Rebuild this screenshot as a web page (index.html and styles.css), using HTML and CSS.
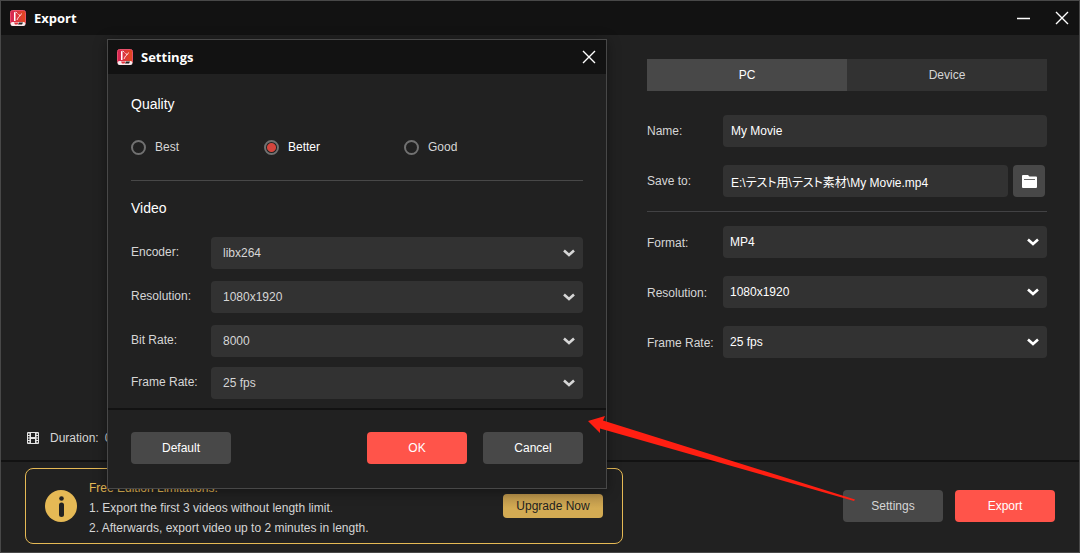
FILE: index.html
```html
<!DOCTYPE html>
<html lang="en">
<head>
<meta charset="utf-8">
<title>Export</title>
<link rel="stylesheet" href="styles.css">
</head>
<body>
<svg class="defs" aria-hidden="true">
  <defs>
    <linearGradient id="logo-fill" x1="0" x2="1" y1="0" y2="0">
      <stop offset="0" stop-color="#d62358"/>
      <stop offset="1" stop-color="#e24a1c"/>
    </linearGradient>
    <symbol id="logo" viewBox="0 0 16 16">
      <rect x="0.5" y="0.5" width="15" height="14" rx="2" fill="url(#logo-fill)" stroke="#e8506a"/>
      <path d="M4 2.500L5.500 1.500V11H4z" fill="#fff"/>
      <path d="M6 2l1.500 1.500M7 10l1.500-3 2-1.500 1-2M8.500 4l1.500 2" stroke="#ffe6e6" stroke-width="0.900" fill="none"/>
      <rect x="0.500" y="12" width="15" height="4" rx="2" fill="#fbe9ec"/>
      <path d="M9 12.500h4l-1 2H8z" fill="#222"/>
      <path d="M4 12.500h4.500l-1 2H5z" fill="#e03038"/>
    </symbol>
    <symbol id="close" viewBox="0 0 14 14">
      <path d="M1 1l12 12M13 1L1 13" stroke="#fff" stroke-width="1.400" fill="none"/>
    </symbol>
    <symbol id="chevron" viewBox="0 0 12 8">
      <path d="M1 1.500l5 4.500 5-4.500" stroke="currentColor" stroke-width="2.600" fill="none"/>
    </symbol>
  </defs>
</svg>

<div class="window">
  <header class="titlebar">
    <svg class="logo"><use href="#logo"/></svg>
    <h1 class="title">Export</h1>
    <button class="window-button" aria-label="Minimize"><svg class="window-icon" viewBox="0 0 14 14"><path d="M0 7.500h13" stroke="#fff" stroke-width="1.500"/></svg></button>
    <button class="window-button" aria-label="Close"><svg class="window-icon"><use href="#close"/></svg></button>
  </header>

  <main class="content">
    <section class="preview">
      <p class="duration">
        <svg class="film" viewBox="0 0 12 12"><rect width="12" height="12" rx="1" fill="#e4e4e4"/><path d="M4 1h4v4H4zM4 7h4v4H4zM1 1.500h1.500V3H1zM1 4h1.500v1.500H1zM1 6.500h1.500V8H1zM1 9h1.500v1.500H1zM9.500 1.500H11V3H9.500zM9.500 4H11v1.500H9.500zM9.500 6.500H11V8H9.500zM9.500 9H11v1.500H9.500z" fill="#222"/></svg>
        <span>Duration:</span><span>00:00:10</span>
      </p>
    </section>

    <form class="output">
      <div class="tabs" role="tablist">
        <button type="button" class="tab tab-active" role="tab" aria-selected="true">PC</button>
        <button type="button" class="tab" role="tab" aria-selected="false">Device</button>
      </div>
      <div class="fields">
        <div class="field">
          <label class="label" for="name">Name:</label>
          <input class="control" id="name" type="text" value="My Movie">
        </div>
        <div class="field">
          <label class="label" for="path">Save to:</label>
          <div class="path">
            <input class="control" id="path" type="text" value="E:\テスト用\テスト素材\My Movie.mp4">
            <button type="button" class="browse" aria-label="Browse"><svg class="folder" viewBox="0 0 15 13"><path d="M1 0h5l1.500 1.500H14a1 1 0 0 1 1 1V12a1 1 0 0 1-1 1H1a1 1 0 0 1-1-1V1a1 1 0 0 1 1-1z" fill="#fff"/><path d="M2 4.500h11" stroke="#6a6a6a"/></svg></button>
          </div>
        </div>
      </div>
      <div class="fields fields-format">
        <div class="field">
          <label class="label" for="format">Format:</label>
          <div class="select"><select class="control" id="format"><option>MP4</option></select><svg class="chevron"><use href="#chevron"/></svg></div>
        </div>
        <div class="field">
          <label class="label" for="resolution">Resolution:</label>
          <div class="select"><select class="control" id="resolution"><option>1080x1920</option></select><svg class="chevron"><use href="#chevron"/></svg></div>
        </div>
        <div class="field">
          <label class="label" for="rate">Frame Rate:</label>
          <div class="select"><select class="control" id="rate"><option>25 fps</option></select><svg class="chevron"><use href="#chevron"/></svg></div>
        </div>
      </div>
    </form>
  </main>

  <footer class="footer">
    <section class="notice">
      <svg class="info" viewBox="0 0 32 32"><circle cx="16" cy="16" r="16" fill="#e5b955"/><circle cx="16.500" cy="8.500" r="2.300" fill="#222"/><rect x="14" y="12.500" width="5" height="14.500" rx="2.500" fill="#222"/></svg>
      <div class="notice-text">
        <p class="notice-title">Free Edition Limitations:</p>
        <p>1. Export the first 3 videos without length limit.</p>
        <p>2. Afterwards, export video up to 2 minutes in length.</p>
      </div>
      <button class="upgrade">Upgrade Now</button>
    </section>
    <div class="actions">
      <button class="button button-muted">Settings</button>
      <button class="button button-primary">Export</button>
    </div>
  </footer>

  <form class="dialog" role="dialog" aria-labelledby="dialog-title">
    <header class="titlebar">
      <svg class="logo"><use href="#logo"/></svg>
      <h2 class="title" id="dialog-title">Settings</h2>
      <button type="button" class="window-button" aria-label="Close"><svg class="window-icon"><use href="#close"/></svg></button>
    </header>
    <div class="dialog-body">
      <h3 class="heading">Quality</h3>
      <div class="radios">
        <label class="radio"><input type="radio" name="quality">Best</label>
        <label class="radio"><input type="radio" name="quality" checked>Better</label>
        <label class="radio"><input type="radio" name="quality">Good</label>
      </div>
      <h3 class="heading">Video</h3>
      <div class="video-fields">
        <div class="field">
          <label class="label" for="v-encoder">Encoder:</label>
          <div class="select"><select class="control" id="v-encoder"><option>libx264</option></select><svg class="chevron"><use href="#chevron"/></svg></div>
        </div>
        <div class="field">
          <label class="label" for="v-resolution">Resolution:</label>
          <div class="select"><select class="control" id="v-resolution"><option>1080x1920</option></select><svg class="chevron"><use href="#chevron"/></svg></div>
        </div>
        <div class="field">
          <label class="label" for="v-bitrate">Bit Rate:</label>
          <div class="select"><select class="control" id="v-bitrate"><option>8000</option></select><svg class="chevron"><use href="#chevron"/></svg></div>
        </div>
        <div class="field">
          <label class="label" for="v-rate">Frame Rate:</label>
          <div class="select"><select class="control" id="v-rate"><option>25 fps</option></select><svg class="chevron"><use href="#chevron"/></svg></div>
        </div>
      </div>
    </div>
    <div class="dialog-footer">
      <button type="button" class="button">Default</button>
      <button type="button" class="button button-primary button-ok">OK</button>
      <button type="button" class="button">Cancel</button>
    </div>
  </form>

  <svg class="arrow" viewBox="0 0 268 86" aria-hidden="true"><path d="M0 6L17 1 15 5.500 267 84.500 266 86 12 13.500 12 18z" fill="#ff1f12"/></svg>
</div>
</body>
</html>
```
FILE: styles.css
```css
* {
  box-sizing: border-box;
}

body,
h1,
h2,
h3,
p {
  margin: 0;
}

body,
button,
input,
select {
  font: 12px/20px "Liberation Sans", Arial, "Noto Sans CJK JP", sans-serif;
}

body {
  background: #212121;
  color: #d6d6d6;
}

button,
input,
select {
  border: 0;
  color: inherit;
}

button {
  padding: 0;
}

svg {
  display: block;
  flex: none;
}

.defs {
  position: absolute;
  width: 0;
  height: 0;
}

.window {
  position: relative;
  display: flex;
  flex-direction: column;
  min-height: 100vh;
  border: 1px solid #484848;
}

.titlebar {
  display: flex;
  align-items: center;
  gap: 8px;
  height: 34px;
  padding: 0 9px;
  background: #121212;
}

.logo {
  width: 16px;
  height: 16px;
}

.title {
  flex: 1;
  color: #fff;
  font: bold 13px/20px "Open Sans", "Noto Sans", sans-serif;
}

.window-button {
  display: grid;
  place-items: center;
  width: 30px;
  height: 30px;
  margin-right: -7px;
  background: none;
}

.window-button + .window-button {
  margin-left: 7px;
}

.window-icon {
  width: 14px;
  height: 14px;
}

.content {
  display: flex;
  flex: 1;
}

.preview {
  display: flex;
  flex: 1;
  align-items: flex-end;
  padding: 0 26px 12px;
}

.duration {
  display: flex;
  align-items: center;
  gap: 6px;
}

.film {
  width: 12px;
  height: 12px;
  margin-right: 5px;
}

.output {
  width: 400px;
  margin: 24px 32px 0 0;
}

.tabs {
  display: grid;
  grid-template-columns: 1fr 1fr;
}

.tab {
  height: 32px;
  background: #323232;
}

.tab-active {
  background: #484848;
  color: #fff;
}

.fields {
  display: grid;
  gap: 18px;
  padding: 24px 0 14px;
}

.fields-format {
  padding: 14px 0;
  border-top: 1px solid #424244;
}

.field {
  display: grid;
  grid-template-columns: 76px 1fr;
  align-items: center;
}

.fields-format .label {
  padding-top: 2px;
}

.control {
  width: 100%;
  min-width: 0;
  height: 32px;
  padding: 0 8px;
  border-radius: 4px;
  background: #323232;
  color: #fff;
  appearance: none;
}

.fields-format .control {
  padding: 0 7px;
}

.path {
  display: flex;
  gap: 5px;
  padding-right: 2px;
}

.path .control {
  font-feature-settings: "palt";
}

.browse {
  display: grid;
  flex: none;
  place-items: center;
  width: 32px;
  height: 32px;
  border-radius: 4px;
  background: #484848;
}

.folder {
  width: 15px;
  height: 13px;
}

.select {
  display: grid;
  align-items: center;
  color: #fff;
}

.select > * {
  grid-area: 1 / 1;
}

.chevron {
  justify-self: end;
  width: 12px;
  height: 8px;
  margin-right: 8px;
  pointer-events: none;
}

.footer {
  display: flex;
  align-items: center;
  justify-content: space-between;
  padding: 6px 24px 8px;
  border-top: 2px solid #121212;
}

.notice {
  display: flex;
  align-items: center;
  width: 598px;
  height: 76px;
  padding: 0 19px;
  border: 1px solid #e5b955;
  border-radius: 8px;
}

.info {
  width: 32px;
  height: 32px;
}

.notice-text {
  flex: 1;
  margin-left: 12px;
  padding-top: 4px;
}

.notice-title {
  color: #e5b955;
}

.upgrade {
  width: 100px;
  height: 24px;
  border-radius: 4px;
  background: linear-gradient(#b8924a, #d3ab53 60%);
  color: #212121;
}

.actions {
  display: flex;
  gap: 12px;
}

.button {
  width: 100px;
  height: 32px;
  border-radius: 4px;
  background: #484848;
  color: #fff;
}

.button-muted {
  color: #d6d6d6;
}

.button-primary {
  background: #ff544a;
}

.dialog {
  position: absolute;
  top: 38px;
  left: 106px;
  width: 500px;
  border: 1px solid #484848;
  background: #212121;
  box-shadow: 0 2px 12px rgba(0, 0, 0, 0.4);
}

.dialog-body {
  padding: 20px 23px 9px;
}

.heading {
  color: #fff;
  font-size: 14px;
  font-weight: normal;
  line-height: 20px;
}

.radios {
  display: flex;
  margin: 20px 0 17px;
  padding-bottom: 19px;
  border-bottom: 1px solid #484848;
  line-height: 27px;
}

.radio {
  display: flex;
  align-items: center;
  gap: 9px;
  width: 140px;
}

.radio:first-child {
  width: 133px;
}

.radio:has(:checked) {
  color: #fff;
}

.radio input {
  width: 15px;
  height: 15px;
  margin: 0;
  border: 2px solid #717171;
  border-radius: 50%;
  appearance: none;
}

.radio input:checked {
  background: radial-gradient(circle, #d4453d 4px, transparent 5px);
}

.video-fields {
  display: grid;
  gap: 12px;
  margin-top: 19px;
}

.video-fields .field {
  grid-template-columns: 80px 1fr;
}

.video-fields .field:last-child {
  margin-top: -2px;
}

.video-fields .label {
  padding-bottom: 2px;
}

.video-fields .select,
.video-fields .control {
  color: #d6d6d6;
}

.video-fields .control {
  padding: 0 12px;
}

.dialog-footer {
  display: flex;
  gap: 16px;
  padding: 22px 23px 24px;
  border-top: 2px solid #121212;
}

.button-ok {
  margin-left: auto;
}

.arrow {
  position: absolute;
  top: 414px;
  left: 587px;
  width: 268px;
  height: 86px;
  pointer-events: none;
}
```
